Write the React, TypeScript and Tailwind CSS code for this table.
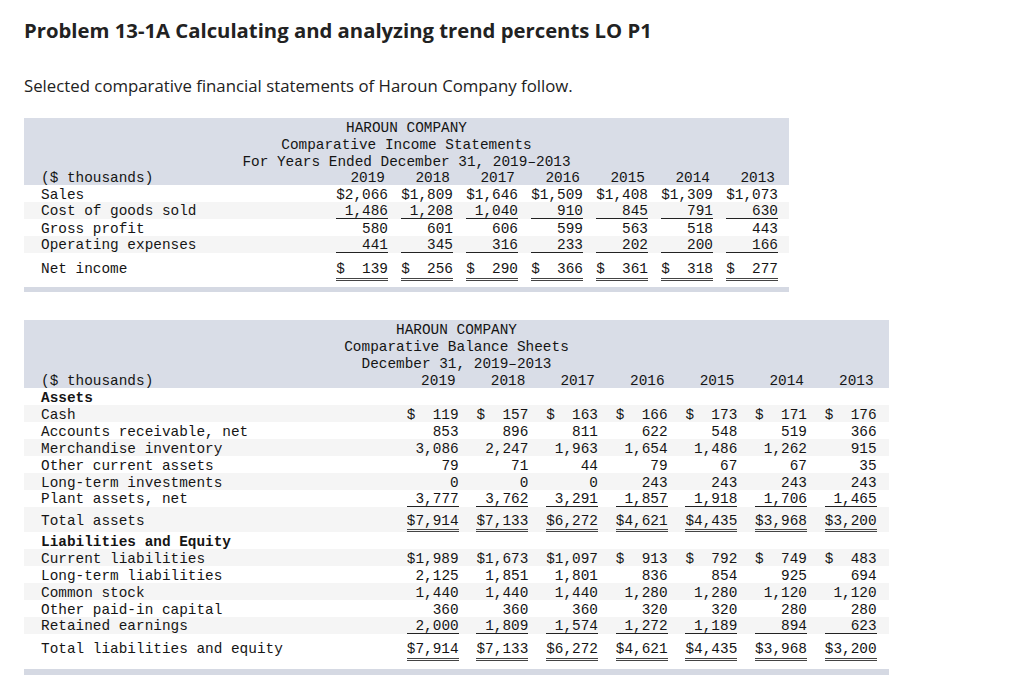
import React from "react";

type Row = {
  label: string;
  values?: string[];
  bold?: boolean;
  line?: "single" | "double";
  shade?: boolean;
  pad?: string;
};

const income: Row[] = [
  { label: "Sales", values: ["$2,066", "$1,809", "$1,646", "$1,509", "$1,408", "$1,309", "$1,073"] },
  { label: "Cost of goods sold", values: ["1,486", "1,208", "1,040", "910", "845", "791", "630"], line: "single", shade: true },
  { label: "Gross profit", values: ["580", "601", "606", "599", "563", "518", "443"] },
  { label: "Operating expenses", values: ["441", "345", "316", "233", "202", "200", "166"], line: "single", shade: true },
  { label: "Net income", values: ["$  139", "$  256", "$  290", "$  366", "$  361", "$  318", "$  277"], line: "double", pad: "pt-[6px]" },
];

const balance: Row[] = [
  { label: "Assets", bold: true },
  { label: "Cash", values: ["$  119", "$  157", "$  163", "$  166", "$  173", "$  171", "$  176"], shade: true },
  { label: "Accounts receivable, net", values: ["853", "896", "811", "622", "548", "519", "366"] },
  { label: "Merchandise inventory", values: ["3,086", "2,247", "1,963", "1,654", "1,486", "1,262", "915"], shade: true },
  { label: "Other current assets", values: ["79", "71", "44", "79", "67", "67", "35"] },
  { label: "Long-term investments", values: ["0", "0", "0", "243", "243", "243", "243"], shade: true },
  { label: "Plant assets, net", values: ["3,777", "3,762", "3,291", "1,857", "1,918", "1,706", "1,465"], line: "single" },
  { label: "Total assets", values: ["$7,914", "$7,133", "$6,272", "$4,621", "$4,435", "$3,968", "$3,200"], line: "double", shade: true, pad: "pt-[4px]" },
  { label: "Liabilities and Equity", bold: true },
  { label: "Current liabilities", values: ["$1,989", "$1,673", "$1,097", "$  913", "$  792", "$  749", "$  483"], shade: true },
  { label: "Long-term liabilities", values: ["2,125", "1,851", "1,801", "836", "854", "925", "694"] },
  { label: "Common stock", values: ["1,440", "1,440", "1,440", "1,280", "1,280", "1,120", "1,120"], shade: true },
  { label: "Other paid-in capital", values: ["360", "360", "360", "320", "320", "280", "280"] },
  { label: "Retained earnings", values: ["2,000", "1,809", "1,574", "1,272", "1,189", "894", "623"], line: "single", shade: true },
  { label: "Total liabilities and equity", values: ["$7,914", "$7,133", "$6,272", "$4,621", "$4,435", "$3,968", "$3,200"], line: "double", pad: "pt-[5px]" },
];

const years = ["2019", "2018", "2017", "2016", "2015", "2014", "2013"];

function Statement({
  title,
  rows,
  width,
  grid,
  pr,
  line,
  tail,
}: {
  title: string[];
  rows: Row[];
  width: string;
  grid: string;
  pr: string;
  line: string;
  tail: string;
}) {
  return (
    <div className={`${width} font-['Liberation_Mono',monospace] text-[14.4px] text-[#151515]`}>
      <div className="bg-[#d9dde7]">
        {title.map((t) => (
          <div key={t} className={`whitespace-pre text-center ${line}`}>
            {t}
          </div>
        ))}
        <div className={`grid ${grid} pl-[17px] ${pr} ${line}`}>
          <div>($ thousands)</div>
          {years.map((y) => (
            <div key={y} className="pr-[3px] text-right">
              {y}
            </div>
          ))}
        </div>
      </div>
      {rows.map((r) => (
        <div
          key={r.label}
          className={`grid ${grid} pl-[17px] ${pr} ${r.shade ? "bg-[#f5f5f5]" : "bg-white"} ${r.pad ?? ""}`}
        >
          <div
            className={`${
              r.line === "double"
                ? "pt-[3px] leading-[14px]"
                : r.line === "single"
                ? "pt-[3px] leading-[13px]"
                : "pt-[4px] leading-[13px]"
            } ${r.bold ? "font-bold" : ""}`}
          >
            {r.label}
          </div>
          {(r.values ?? []).map((v, i) => (
            <div
              key={i}
              className={`whitespace-pre text-right ${
                r.line === "single"
                  ? "border-b border-[#222] pt-[3px] leading-[13px]"
                  : r.line === "double"
                  ? "border-b-[3px] border-double border-[#444] pt-[3px] pb-[1.5px] leading-[14px]"
                  : "pt-[4px] leading-[13px]"
              }`}
            >
              {v}
            </div>
          ))}
        </div>
      ))}
      <div className={tail} />
    </div>
  );
}

export default function App() {
  return (
    <div className="min-h-[693px] bg-white px-6 pt-4 text-[#222]">
      <h1 className="font-['Open_Sans',sans-serif] text-[20.3px] font-bold leading-[28px]">
        Problem 13-1A Calculating and analyzing trend percents LO P1
      </h1>
      <p className="mt-[30px] font-['Open_Sans',sans-serif] text-[16.8px] leading-[24px]">
        Selected comparative financial statements of Haroun Company follow.
      </p>
      <div className="mt-5">
        <Statement
          title={["HAROUN COMPANY", "Comparative Income Statements", "For Years Ended December 31, 2019–2013"]}
          rows={income}
          width="w-[765px]"
          grid="grid-cols-[282px_repeat(7,52px)] gap-x-[13px]"
          pr="pr-[11px]"
          line="h-[16.75px] pt-[4px] leading-[12.75px]"
          tail="mt-[6px] h-[5px] bg-[#d5d9e3]"
        />
      </div>
      <div className="mt-[28px]">
        <Statement
          title={["HAROUN COMPANY", "Comparative Balance Sheets", "December 31, 2019–2013"]}
          rows={balance}
          width="w-[865px]"
          grid="grid-cols-[348px_repeat(7,52px)] gap-x-[17.67px]"
          pr="pr-[12px]"
          line="h-[17px] pt-[4px] leading-[13px]"
          tail="mt-[8px] h-[6px] bg-[#d5d9e3]"
        />
      </div>
    </div>
  );
}
